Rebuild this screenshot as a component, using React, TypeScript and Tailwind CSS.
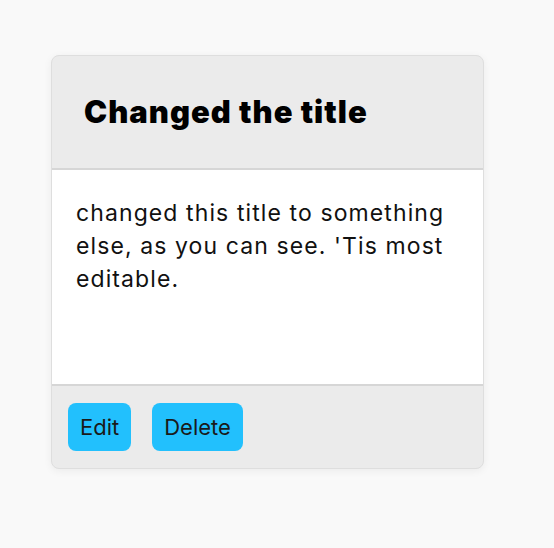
import React from "react";

export default function App() {
  return (
    <div className="min-h-[548px] w-full bg-[#f9f9f9] pt-[55px] pl-[51px]">
      <div className="w-[433px] overflow-hidden rounded-[8px] border border-[#dedede] bg-[#ebebeb] shadow-[0_2px_8px_rgba(0,0,0,0.06)]">
        <div className="h-[114px] border-b-2 border-[#d6d6d6] pl-[32px] pt-[34px]">
          <h2 className="font-['Inter',sans-serif] text-[31px] font-black leading-[44px] tracking-[1px] text-black">
            Changed the title
          </h2>
        </div>
        <div className="h-[216px] border-b-2 border-[#d6d6d6] bg-white px-[24px] pt-[27px]">
          <p className="font-['Inter',sans-serif] text-[23px] leading-[33px] tracking-[1.1px] text-[#111]">
            changed this title to something else, as you can see. 'Tis most editable.
          </p>
        </div>
        <div className="flex h-[82px] items-start gap-[21px] pl-[16px] pt-[17px]">
          <button className="h-[48px] rounded-[8px] bg-[#22c0fd] px-[12px] font-['Inter',sans-serif] text-[22px] text-[#1a1a1a]">
            Edit
          </button>
          <button className="h-[48px] rounded-[8px] bg-[#22c0fd] px-[12px] font-['Inter',sans-serif] text-[22px] text-[#1a1a1a]">
            Delete
          </button>
        </div>
      </div>
    </div>
  );
}
